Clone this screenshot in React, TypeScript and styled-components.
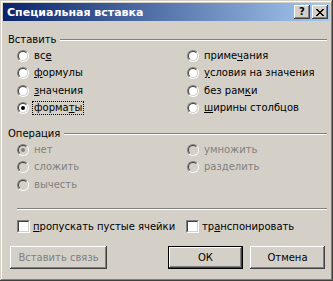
import React from 'react';
import styled, { createGlobalStyle } from 'styled-components';

const Global = createGlobalStyle`
  html, body { margin: 0; padding: 0; background: #d4d0c8; }
`;

const Window = styled.div`
  width: 333px;
  height: 281px;
  box-sizing: border-box;
  padding: 3px;
  background: #d4d0c8;
  box-shadow: inset -1px -1px #404040, inset 1px 1px #d4d0c8, inset -2px -2px #808080, inset 2px 2px #fff;
  display: flex;
  flex-direction: column;
  font-family: "DejaVu Sans", Verdana, sans-serif;
  font-size: 10px;
  color: #000;
`;

const TitleBar = styled.div`
  height: 18px;
  display: flex;
  align-items: center;
  padding: 0 2px;
  background: linear-gradient(to right, #0a246a, #a6caf0);
`;

const Title = styled.div`
  flex: 1;
  padding-left: 2px;
  color: #fff;
  font-family: "DejaVu Sans", Verdana, sans-serif;
  font-weight: bold;
  font-size: 11px;
`;

const CaptionButton = styled.div<{ $gap?: boolean }>`
  width: 16px;
  height: 14px;
  box-sizing: border-box;
  margin-left: ${({ $gap }) => ($gap ? '2px' : '0')};
  background: #d4d0c8;
  box-shadow: inset -1px -1px #404040, inset 1px 1px #fff, inset -2px -2px #808080, inset 2px 2px #d4d0c8;
  display: flex;
  align-items: center;
  justify-content: center;
  font-family: "DejaVu Sans", sans-serif;
  font-weight: bold;
  font-size: 10px;
  line-height: 14px;
`;

const Content = styled.div`
  flex: 1;
  padding: 0 3px 0 5px;
  display: flex;
  flex-direction: column;
`;

const GroupHeader = styled.div<{ $top: number }>`
  margin-top: ${({ $top }) => $top}px;
  height: 14px;
  display: flex;
  align-items: center;
  gap: 4px;
  line-height: 14px;
`;

const Etched = styled.div`
  flex: 1;
  height: 0;
  border-top: 1px solid #808080;
  border-bottom: 1px solid #fff;
`;

const Options = styled.div<{ $rows: number }>`
  padding-left: 9px;
  display: grid;
  grid-template-columns: 170px auto;
  grid-template-rows: repeat(${({ $rows }) => $rows}, 17.5px);
  grid-auto-flow: column;
`;

const Option = styled.div<{ $disabled?: boolean }>`
  display: flex;
  align-items: center;
  gap: 4px;
  color: ${({ $disabled }) => ($disabled ? '#808080' : '#000')};
`;

const Radio = styled.span<{ $checked?: boolean; $disabled?: boolean }>`
  position: relative;
  flex: none;
  width: 12px;
  height: 12px;
  box-sizing: border-box;
  border-radius: 50%;
  border: 1px solid;
  border-color: #808080 #fff #fff #808080;

  &::before {
    content: '';
    position: absolute;
    inset: 0;
    border-radius: 50%;
    border: 1px solid;
    border-color: #404040 #d4d0c8 #d4d0c8 #404040;
    background: ${({ $disabled }) => ($disabled ? '#d4d0c8' : '#fff')};
  }

  &::after {
    content: '';
    display: ${({ $checked }) => ($checked ? 'block' : 'none')};
    position: absolute;
    left: 3px;
    top: 3px;
    width: 4px;
    height: 4px;
    border-radius: 50%;
    background: ${({ $disabled }) => ($disabled ? '#808080' : '#000')};
  }
`;

const Label = styled.span<{ $focus?: boolean }>`
  padding: 0 1px;
  outline: ${({ $focus }) => ($focus ? '1px dotted #000' : 'none')};
  line-height: 12px;
`;

const U = styled.span`
  text-decoration: underline;
`;

const Separator = styled.div`
  margin: 14px 0 0 9px;
  height: 0;
  border-top: 1px solid #808080;
  border-bottom: 1px solid #fff;
`;

const CheckRow = styled.div`
  margin-top: 8px;
  padding-left: 9px;
  height: 17px;
  display: flex;
  align-items: center;
`;

const Check = styled.label<{ $width?: number }>`
  width: ${({ $width }) => ($width ? `${$width}px` : 'auto')};
  display: flex;
  align-items: center;
  gap: 3px;
`;

const Box = styled.span`
  position: relative;
  flex: none;
  width: 13px;
  height: 13px;
  box-sizing: border-box;
  border: 1px solid;
  border-color: #808080 #fff #fff #808080;

  &::before {
    content: '';
    position: absolute;
    inset: 0;
    border: 1px solid;
    border-color: #404040 #d4d0c8 #d4d0c8 #404040;
    background: #fff;
  }
`;

const Buttons = styled.div`
  margin-top: 11px;
  padding: 0 2px;
  display: flex;
  gap: 7px;
`;

const Button = styled.div<{ $width: number; $default?: boolean; $disabled?: boolean; $push?: boolean }>`
  width: ${({ $width }) => $width}px;
  height: 23px;
  box-sizing: border-box;
  margin-left: ${({ $push }) => ($push ? 'auto' : '0')};
  border: ${({ $default }) => ($default ? '1px solid #000' : 'none')};
  background: #d4d0c8;
  box-shadow: inset -1px -1px #404040, inset 1px 1px #fff, inset -2px -2px #808080, inset 2px 2px #d4d0c8;
  display: flex;
  align-items: center;
  justify-content: center;
  color: ${({ $disabled }) => ($disabled ? '#808080' : '#000')};
`;

const CloseIcon = () => (
  <svg width="8" height="7" viewBox="0 0 8 7" shapeRendering="crispEdges">
    <path d="M0 0h2v1h-2zM6 0h2v1h-2zM1 1h2v1h-2zM5 1h2v1h-2zM2 2h4v1h-4zM3 3h2v1h-2zM2 4h4v1h-4zM1 5h2v1h-2zM5 5h2v1h-2zM0 6h2v1h-2zM6 6h2v1h-2z" fill="#000" />
  </svg>
);

export default function App() {
  return (
    <>
      <Global />
      <Window>
        <TitleBar>
          <Title>Специальная вставка</Title>
          <CaptionButton>?</CaptionButton>
          <CaptionButton $gap>
            <CloseIcon />
          </CaptionButton>
        </TitleBar>
        <Content>
          <GroupHeader $top={12}>
            <span>Вставить</span>
            <Etched />
          </GroupHeader>
          <Options $rows={4}>
            <Option><Radio /><Label>вс<U>е</U></Label></Option>
            <Option><Radio /><Label><U>ф</U>ормулы</Label></Option>
            <Option><Radio /><Label><U>з</U>начения</Label></Option>
            <Option><Radio $checked /><Label $focus>форма<U>т</U>ы</Label></Option>
            <Option><Radio /><Label>приме<U>ч</U>ания</Label></Option>
            <Option><Radio /><Label><U>у</U>словия на значения</Label></Option>
            <Option><Radio /><Label>без рам<U>к</U>и</Label></Option>
            <Option><Radio /><Label><U>ш</U>ирины столбцов</Label></Option>
          </Options>
          <GroupHeader $top={10}>
            <span>Операция</span>
            <Etched />
          </GroupHeader>
          <Options $rows={3}>
            <Option $disabled><Radio $checked $disabled /><Label>нет</Label></Option>
            <Option $disabled><Radio $disabled /><Label>сложить</Label></Option>
            <Option $disabled><Radio $disabled /><Label>вычесть</Label></Option>
            <Option $disabled><Radio $disabled /><Label>умножить</Label></Option>
            <Option $disabled><Radio $disabled /><Label>разделить</Label></Option>
          </Options>
          <Separator />
          <CheckRow>
            <Check $width={169}><Box /><span><U>п</U>ропускать пустые ячейки</span></Check>
            <Check><Box /><span>тр<U>а</U>нспонировать</span></Check>
          </CheckRow>
          <Buttons>
            <Button $width={97} $disabled>Вставить связь</Button>
            <Button $width={75} $default $push>ОК</Button>
            <Button $width={75}>Отмена</Button>
          </Buttons>
        </Content>
      </Window>
    </>
  );
}
